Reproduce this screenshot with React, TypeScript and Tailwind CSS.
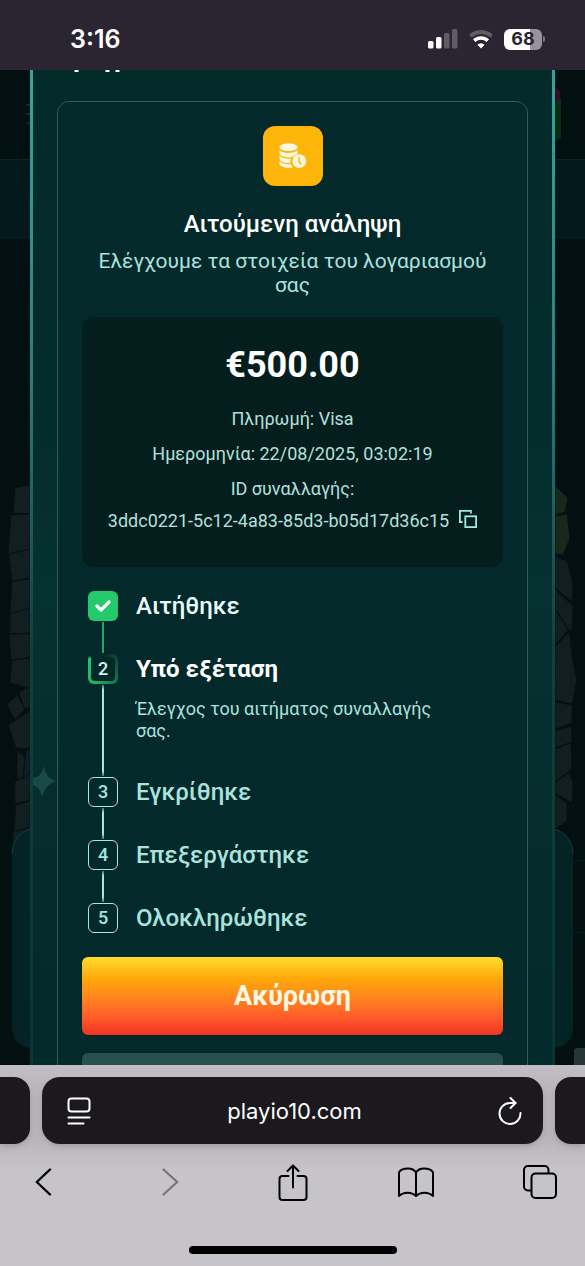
import React from "react";
import clsx from "clsx";

interface Step {
  id: number;
  label: string;
  status: "done" | "current" | "pending";
  description?: string;
}

const steps: Step[] = [
  { id: 1, label: "Αιτήθηκε", status: "done" },
  {
    id: 2,
    label: "Υπό εξέταση",
    status: "current",
    description: "Έλεγχος του αιτήματος συναλλαγής σας.",
  },
  { id: 3, label: "Εγκρίθηκε", status: "pending" },
  { id: 4, label: "Επεξεργάστηκε", status: "pending" },
  { id: 5, label: "Ολοκληρώθηκε", status: "pending" },
];

function StatusBar() {
  return (
    <header className="flex h-[70px] shrink-0 items-center justify-between bg-[#2b2431] pt-2 pr-10 pl-[70px] font-['Inter',sans-serif] text-white">
      <span className="text-[25px] leading-8 font-semibold">3:16</span>
      <div className="flex items-center gap-[11px]">
        {/* Signal */}
        <svg width="30" height="20" viewBox="0 0 30 20" fill="#fff">
          <rect x="0" y="12" width="5.5" height="7.5" rx="1.5" />
          <rect x="8" y="8" width="5.5" height="11.5" rx="1.5" />
          <rect x="16" y="4" width="5.5" height="15.5" rx="1.5" opacity=".25" />
          <rect x="24" y="0" width="5.5" height="19.5" rx="1.5" opacity=".25" />
        </svg>
        {/* Wi-Fi */}
        <svg width="24" height="19" viewBox="0 0 24 19" fill="none" stroke="#fff">
          <path d="M1.500 6.200a15.500 15.500 0 0 1 21 0" strokeWidth="4" opacity=".25" />
          <path d="M5.200 10.600a10 10 0 0 1 13.600 0" strokeWidth="3.600" />
          <path d="M12 18.600l-3.600-3.800a5.400 5.400 0 0 1 7.200 0z" fill="#fff" stroke="none" />
        </svg>
        {/* Battery */}
        <div className="flex items-center gap-px">
          <div className="flex h-[21px] w-[38px] items-center justify-center rounded-md bg-[linear-gradient(90deg,#fff_68%,#97929b_68%)] text-lg leading-5 font-bold text-[#2b2431]">
            68
          </div>
          <div className="h-[6px] w-[2px] rounded-r-sm bg-[#79737e]" />
        </div>
      </div>
    </header>
  );
}

function LeftScene() {
  return (
    <svg
      className="h-full w-[30px] shrink-0"
      viewBox="0 0 30 995"
      preserveAspectRatio="xMidYMin slice"
      aria-hidden="true"
    >
      <rect width="30" height="995" fill="#021011" />
      <rect y="90" width="30" height="79" fill="#03191b" />
      <path d="M0 89.5h30" stroke="#082527" />
      <path d="M26.500 35h3.500M26.500 44h3.500M27 53h3" stroke="#193a3b" strokeWidth="1.500" />
      <g fill="#111f21" stroke="#081213" strokeWidth="1">
        <path d="M15 418l15-3v29l-17-1zM11 445l19-1v35l-22 5zM9 484l21-5v30l-18 2zM12 511l18-3v36l-20 0z" />
        <path d="M10 544l20-6v25l-20 1zM9 564l21 0v24l-19 2zM12 590l18-3v31l-20-5zM7 635l10-10 8 14-10 11zM19 622l11-5v20l-6 2zM8 655l22-14v38l-14-1z" />
        <path d="M17 680l8 7-2 20-6 2zM26 680l4 0v24l-7 5zM15 712l15-10v28l-15 4zM16 735l14-4v26l-16 5zM13 762l17-5v10l-17 10z" />
      </g>
      <path d="M12 782a24 24 0 0 1 18-23v219a20 20 0 0 1-18-18z" fill="#042325" />
      <path d="M12 784a24 24 0 0 1 18-24.500" fill="none" stroke="#123c3c" />
    </svg>
  );
}

function RightScene() {
  return (
    <svg
      className="h-full w-[30px] shrink-0"
      viewBox="0 0 30 995"
      preserveAspectRatio="xMidYMin slice"
      aria-hidden="true"
    >
      <rect width="30" height="995" fill="#021011" />
      <rect y="90" width="30" height="79" fill="#03191b" />
      <path d="M0 89.500h30" stroke="#082527" />
      <path d="M0 28h6v40l-6 3z" fill="#0b2c12" />
      <path d="M0 17a8 8 0 0 1 0 15z" fill="#3a0b24" />
      <g fill="#18291c" stroke="#081213" strokeWidth="1">
        <path d="M0 415l13 13-3 14-10 3zM0 446l12-2 3 24-7 17-8-1z" />
      </g>
      <g fill="#111f21" stroke="#081213" strokeWidth="1">
        <path d="M0 486l12 5 6 22-1 19-17-14zM0 519l18 17-1 24-3 0-14-22zM0 539l13 21-13 16zM0 577l14-15 4 30 4 18-5 24-17-4z" />
        <path d="M0 632l17 3 0 18-17 6zM0 661l16-5 1 16-17 6zM0 679l16-6 1 26-17 13zM0 713l13-10 5 8-1 22-17-10zM0 725l12 8 0 18-12 8z" />
      </g>
      <path d="M0 759a24 24 0 0 1 18 23v178a20 20 0 0 1-18 18z" fill="#042325" />
      <path d="M0 759.500a24 24 0 0 1 18 24.500" fill="none" stroke="#123c3c" />
      <path d="M18 793q4-3 12-3M18 860q4 3 12 3" fill="none" stroke="#052122" />
      <path d="M19 995v-14q0-3 3-3h8v17z" fill="#253536" />
    </svg>
  );
}

function CoinsClockIcon() {
  return (
    <svg width="28" height="26" viewBox="0 0 28 26" aria-hidden="true">
      <g fill="#fff8e0">
        <ellipse cx="9.500" cy="4.200" rx="9" ry="3.900" />
        <path d="M.5 7c2 2.300 5.500 3 9 3s7-.7 9-3v3c0 .6-.4 1.200-1 1.700-1.800.3-3.300 1.100-4.400 2.400-1.200.2-2.400.3-3.600.3-5 0-9-1.900-9-4.300z" />
        <path d="M.5 12.500c2 2.300 5.500 3.300 9 3.300.9 0 1.700 0 2.500-.1a8 8 0 0 0-.5 4.200c-.7.1-1.300.1-2 .1-5 0-9-1.900-9-4.300z" />
        <path d="M.5 18c2 2.300 5.500 3.300 9 3.300.8 0 1.600 0 2.300-.1a8 8 0 0 0 2.200 3.200c-1.400.2-2.900.4-4.500.4-5 0-9-1.700-9-4z" />
        <circle cx="20.300" cy="18.200" r="6.900" />
      </g>
      <path d="M20 14.200v4.200l2.200 2.800" fill="none" stroke="#fdb50a" strokeWidth="1.500" />
    </svg>
  );
}

function StepMarker({ step }: { step: Step }) {
  if (step.status === "done") {
    return (
      <span className="flex size-[30px] items-center justify-center rounded-md bg-[#23c96b]">
        <svg width="16" height="12" viewBox="0 0 16 12" fill="none" aria-label="1">
          <path
            d="M2 6l4 4 8-8"
            stroke="#fff"
            strokeWidth="3.200"
            strokeLinecap="round"
            strokeLinejoin="round"
          />
        </svg>
      </span>
    );
  }
  if (step.status === "current") {
    return (
      <span className="flex size-[30px] rounded-md bg-[conic-gradient(from_-36deg,#03292a_0deg,#03292a_36deg,#114238_80deg,#1b6b4b_160deg,#22b566_250deg,#23c96b_345deg,#03292a_352deg)] p-[3px]">
        <span className="flex size-full items-center justify-center rounded-sm bg-[#03292a] text-lg font-medium text-[#d4f6f3]">
          {step.id}
        </span>
      </span>
    );
  }
  return (
    <span className="flex size-[30px] items-center justify-center rounded-md border border-[#a5e6e1] text-lg font-medium text-[#a5e6e1]">
      {step.id}
    </span>
  );
}

function StepList() {
  return (
    <ol className="mt-6 pl-1.5">
      {steps.map((step, index) => {
        const last = index === steps.length - 1;
        return (
          <li key={step.id} className="flex gap-[18px]">
            <div className="flex shrink-0 flex-col items-center">
              <StepMarker step={step} />
              {!last && (
                <span
                  className={clsx(
                    "my-px w-[2px] flex-1",
                    step.status === "done"
                      ? "bg-[#28a565]"
                      : "bg-[linear-gradient(180deg,#3c6f6f,#a5e6e1_5px,#a5e6e1_calc(100%-5px),#3c6f6f)]"
                  )}
                />
              )}
            </div>
            <div className={clsx("pr-10", !last && "pb-[33px]")}>
              <h3
                className={clsx(
                  "text-2xl leading-[30px]",
                  step.status === "done" && "font-medium text-[#e9fbfa]",
                  step.status === "current" && "font-bold text-white",
                  step.status === "pending" && "font-medium text-[#a9e3df]"
                )}
              >
                {step.label}
              </h3>
              {step.description && (
                <p className="mt-3.5 pb-0.5 text-lg leading-[22px] text-[#a9e3df]">
                  {step.description}
                </p>
              )}
            </div>
          </li>
        );
      })}
    </ol>
  );
}

function TransactionDetails() {
  return (
    <div className="mt-5 rounded-xl bg-[#041d1d] px-6 pt-7 pb-8 text-center text-lg text-[#b3e0dd]">
      <p className="text-4xl leading-10 font-bold text-white">€500.00</p>
      <p className="mt-5 leading-7">Πληρωμή: Visa</p>
      <p className="mt-[7px] leading-7">Ημερομηνία: 22/08/2025, 03:02:19</p>
      <p className="mt-[7px] leading-7">ID συναλλαγής:</p>
      <div className="mt-1 flex items-center justify-center gap-2.5 leading-7">
        <span>3ddc0221-5c12-4a83-85d3-b05d17d36c15</span>
        <button type="button" aria-label="Αντιγραφή" className="pb-1">
          <svg width="18" height="18" viewBox="0 0 18 18" fill="none" stroke="#a5e6e1" strokeWidth="1.800">
            <path d="M3.500 12H.9V.9h11v2.600" />
            <rect x="6.300" y="6.300" width="10.800" height="10.800" />
          </svg>
        </button>
      </div>
    </div>
  );
}

function WithdrawalCard() {
  return (
    <section className="flex flex-col rounded-xl border border-[#285e5d] bg-[#03292a] p-6">
      <div className="flex size-[60px] items-center justify-center self-center rounded-xl bg-[#fdb50a]">
        <CoinsClockIcon />
      </div>
      <h2 className="mt-6 text-center text-2xl leading-7 font-medium text-white">
        Αιτούμενη ανάληψη
      </h2>
      <p className="mt-[11px] text-center text-[21px] leading-6 text-[#a9e3df]">
        Ελέγχουμε τα στοιχεία του λογαριασμού σας
      </p>
      <TransactionDetails />
      <StepList />
      <div className="mt-6 flex flex-col gap-[18px]">
        <button
          type="button"
          className="h-[78px] rounded-md bg-[linear-gradient(180deg,#ffdc2e_0%,#ffa80a_28%,#ff8a1c_50%,#ff5a2a_78%,#f03422_100%)] text-[27px] font-bold text-[#fff8e6]"
        >
          Ακύρωση
        </button>
        <button type="button" aria-label="Κλείσιμο" className="h-[78px] rounded-md bg-[#28504f]" />
      </div>
    </section>
  );
}

function BrowserBar() {
  return (
    <footer className="flex h-[201px] shrink-0 flex-col bg-[linear-gradient(180deg,#c1bfc3_0px,#b6b3b9_30px,#b6b3b9_70px,#c6c4c9_105px)] font-['Inter',sans-serif]">
      {/* Address bar with the neighbouring tabs */}
      <div className="mt-3 flex h-[67px] gap-3">
        <div className="w-[30px] rounded-r-2xl bg-[#1b191e] shadow-md" />
        <div className="flex flex-1 items-center justify-between rounded-[18px] bg-[#1b191e] pr-[21px] pl-[25px] text-white shadow-md">
          <button type="button" aria-label="Reader">
            <svg width="24" height="28" viewBox="0 0 24 28" fill="none" stroke="#fff" strokeWidth="2" strokeLinecap="round">
              <rect x="1.500" y="1.500" width="21" height="13" rx="3" />
              <path d="M1.500 20.500h21M1.500 26.500h15" />
            </svg>
          </button>
          <span className="text-[22px] leading-7">playio10.com</span>
          <button type="button" aria-label="Reload">
            <svg width="24" height="28" viewBox="0 0 24 28" fill="none" stroke="#fff" strokeWidth="2" strokeLinecap="round" strokeLinejoin="round">
              <path d="M17.500 6H12A10.500 10.500 0 1 0 22.500 16" />
              <path d="M12.500 1l5 5-5 5" />
            </svg>
          </button>
        </div>
        <div className="w-[30px] rounded-l-2xl bg-[#1b191e] shadow-md" />
      </div>
      {/* Toolbar */}
      <nav className="mt-[18px] flex h-10 items-center justify-between pr-7 pl-[35px] text-black">
        <button type="button" aria-label="Back">
          <svg width="17" height="28" viewBox="0 0 17 28" fill="none" stroke="currentColor" strokeWidth="2.400" strokeLinecap="round" strokeLinejoin="round">
            <path d="M15 1.500L1.800 14 15 26.500" />
          </svg>
        </button>
        <button type="button" aria-label="Forward" disabled className="ml-5 text-[#77747b]">
          <svg width="17" height="28" viewBox="0 0 17 28" fill="none" stroke="currentColor" strokeWidth="2.200" strokeLinecap="round" strokeLinejoin="round">
            <path d="M1.500 1.500L15.200 14 1.500 26.500" />
          </svg>
        </button>
        <button type="button" aria-label="Share" className="ml-2.5">
          <svg width="30" height="37" viewBox="0 0 30 37" fill="none" stroke="currentColor" strokeWidth="2" strokeLinecap="round" strokeLinejoin="round">
            <path d="M10.500 12H4.500a3 3 0 0 0-3 3v18a3 3 0 0 0 3 3h21a3 3 0 0 0 3-3V15a3 3 0 0 0-3-3h-6" />
            <path d="M15 23.500V1.500M9.500 7L15 1.500 20.500 7" />
          </svg>
        </button>
        <button type="button" aria-label="Bookmarks">
          <svg width="36" height="31" viewBox="0 0 36 31" fill="none" stroke="currentColor" strokeWidth="2" strokeLinejoin="round">
            <path d="M18 5.500C16.500 3 13.500 1.500 10 1.500S2.500 3 1 5.200V29c2-2 5-3.300 8.500-3.300s6.500 1.300 8.500 3.300c2-2 5-3.300 8.500-3.300S33 27 35 29V5.200c-1.500-2.200-5.500-3.700-9-3.700S19.500 3 18 5.500zM18 5.500V29" />
          </svg>
        </button>
        <button type="button" aria-label="Tabs">
          <svg width="34" height="34" viewBox="0 0 34 34" fill="none" stroke="currentColor" strokeWidth="2">
            <path d="M8.500 25.500H5a4 4 0 0 1-4-4V5a4 4 0 0 1 4-4h16.500a4 4 0 0 1 4 4v3.500" />
            <rect x="8.500" y="8.500" width="24.500" height="24.500" rx="4" />
          </svg>
        </button>
      </nav>
      <div className="mt-auto mb-3 h-2 w-[208px] self-center rounded-full bg-black" />
    </footer>
  );
}

export default function App() {
  return (
    <div className="flex h-screen w-full flex-col overflow-hidden bg-[#021011] font-['Roboto',sans-serif]">
      <StatusBar />
      <main className="flex min-h-0 flex-1 overflow-hidden">
        <LeftScene />
        <div className="w-[3px] shrink-0 bg-[linear-gradient(180deg,#3aa39c_0%,#2d7f7b_30%,#123f3e_58%,#0a3434_100%)]" />
        <div className="relative min-w-0 flex-1 overflow-hidden bg-[linear-gradient(180deg,#022a29_0%,#032d2c_35%,#053130_52%,#042d2c_75%,#022a2a_100%)] px-6">
          {/* Tail of the scrolled heading */}
          <svg className="h-[31px] w-full" aria-hidden="true">
            <path d="M17.500 1h4M48.500 1h4M58.500 1h4" stroke="#e9fbfa" strokeWidth="2" />
          </svg>
          <svg className="absolute top-[696px] left-0" width="24" height="32" viewBox="0 0 24 32" aria-hidden="true">
            <path d="M11 0q1 12 12 15-11 4-14 16Q7 21 0 19v-7q8 0 11-12z" fill="#1a4a46" />
          </svg>
          <WithdrawalCard />
        </div>
        <div className="w-[3px] shrink-0 bg-[linear-gradient(180deg,#3aa39c_0%,#2d7f7b_30%,#123f3e_58%,#0a3434_100%)]" />
        <RightScene />
      </main>
      <BrowserBar />
    </div>
  );
}
